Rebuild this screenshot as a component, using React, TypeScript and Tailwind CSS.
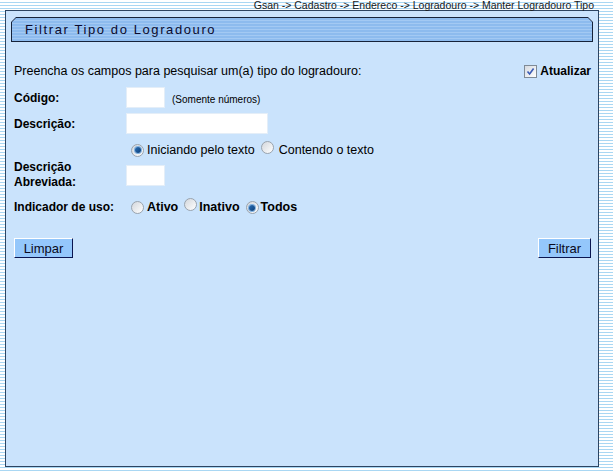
import React from "react";

const font = { fontFamily: '"Liberation Sans", Arial, sans-serif' };

function Radio({ checked }: { checked?: boolean }) {
  return (
    <span className="relative inline-flex h-[13px] w-[13px] shrink-0 items-center justify-center rounded-full border border-[#9aa3ad] bg-gradient-to-br from-[#d3d7dc] to-[#ffffff]">
      {checked && (
        <span className="h-[6px] w-[6px] rounded-full bg-gradient-to-br from-[#2a6fb5] to-[#0b3f7a] shadow-[0_0_0_1px_#7fb0e0]" />
      )}
    </span>
  );
}

function Checkbox() {
  return (
    <span className="inline-flex h-[13px] w-[13px] shrink-0 items-center justify-center border border-[#7f8a96] bg-gradient-to-br from-[#d6dae0] to-[#ffffff]">
      <svg width="9" height="9" viewBox="0 0 9 9">
        <path d="M1.5 4.5 L3.6 7 L7.6 1.5" fill="none" stroke="#3b5bb5" strokeWidth="1.6" />
      </svg>
    </span>
  );
}

function Input({ w }: { w: string }) {
  return <span className={`block h-[21px] ${w} border border-[#e4eef8] bg-white`} />;
}

export default function App() {
  return (
    <div
      className="h-[472px] w-[613px] overflow-hidden bg-[repeating-linear-gradient(to_bottom,#ffffff_0px,#ffffff_2px,#a9d7f3_2px,#a9d7f3_3px)] text-[12.5px] text-black"
      style={font}
    >
      <div className="h-[10px] pr-[19px] text-right text-[10.5px] leading-[11px] text-[#1a1a1a]">
        Gsan -&gt; Cadastro -&gt; Endereco -&gt; Logradouro -&gt; Manter Logradouro Tipo
      </div>
      <div className="ml-[5px] flex h-[457px] w-[594px] flex-col border border-[#2c4461] bg-[#cae3fc] pl-[5px] pr-[4px] pt-[6px]">
        <div className="h-[25px] w-[582px] bg-[#16233a] [clip-path:polygon(5px_0,calc(100%-5px)_0,100%_5px,100%_100%,0_100%,0_5px)]">
          <div className="ml-[1px] mt-[1px] flex h-[23px] w-[580px] items-center bg-[repeating-linear-gradient(to_bottom,#8dbbee_0px,#8dbbee_2px,#a3c9f3_2px,#a3c9f3_3px)] pl-[13px] text-[13px] tracking-[1.6px] text-[#0b0b2e] [clip-path:polygon(4px_0,calc(100%-4px)_0,100%_4px,100%_100%,0_100%,0_4px)]">
            Filtrar Tipo do Logradouro
          </div>
        </div>

        <div className="flex flex-col pl-[3px] pr-[3px]">
          <div className="mt-[22px] flex h-[14px] items-center justify-between">
            <span>Preencha os campos para pesquisar um(a) tipo do logradouro:</span>
            <span className="flex items-center gap-[3px] text-[12px] font-bold">
              <Checkbox />
              <span>Atualizar</span>
            </span>
          </div>

          <div className="mt-[9px] flex h-[21px] items-center">
            <span className="w-[112px] text-[12px] font-bold">Código:</span>
            <Input w="w-[39px]" />
            <span className="ml-[7px] mt-[3px] text-[10px]">(Somente números)</span>
          </div>

          <div className="mt-[5px] flex h-[21px] items-center">
            <span className="w-[112px] text-[12px] font-bold">Descrição:</span>
            <Input w="w-[142px]" />
          </div>

          <div className="mt-[9px] flex h-[14px] items-center pl-[117px]">
            <Radio checked />
            <span className="ml-[3px]">Iniciando pelo texto</span>
            <span className="ml-[6px]">
              <Radio />
            </span>
            <span className="ml-[5px]">Contendo o texto</span>
          </div>

          <div className="mt-[3px] flex h-[30px] items-center">
            <span className="w-[112px] text-[12px] font-bold leading-[15px]">
              Descrição
              <br />
              Abreviada:
            </span>
            <Input w="w-[39px]" />
          </div>

          <div className="mt-[10px] flex h-[14px] items-center">
            <span className="w-[117px] text-[12px] font-bold">Indicador de uso:</span>
            <Radio />
            <span className="ml-[3px] font-bold">Ativo</span>
            <span className="ml-[6px]">
              <Radio />
            </span>
            <span className="ml-[2px] font-bold">Inativo</span>
            <span className="ml-[6px]">
              <Radio checked />
            </span>
            <span className="ml-[2px] font-bold">Todos</span>
          </div>

          <div className="mt-[24px] flex items-center justify-between">
            <button className="h-[20px] w-[59px] border border-b-[#0a1550] border-l-white border-r-[#0a1550] border-t-white bg-[#94c7fb] text-[13px] leading-none text-[#0a0a20]">
              Limpar
            </button>
            <button className="h-[20px] w-[53px] border border-b-[#0a1550] border-l-white border-r-[#0a1550] border-t-white bg-[#94c7fb] text-[13px] leading-none text-[#0a0a20]">
              Filtrar
            </button>
          </div>
        </div>
      </div>
    </div>
  );
}
